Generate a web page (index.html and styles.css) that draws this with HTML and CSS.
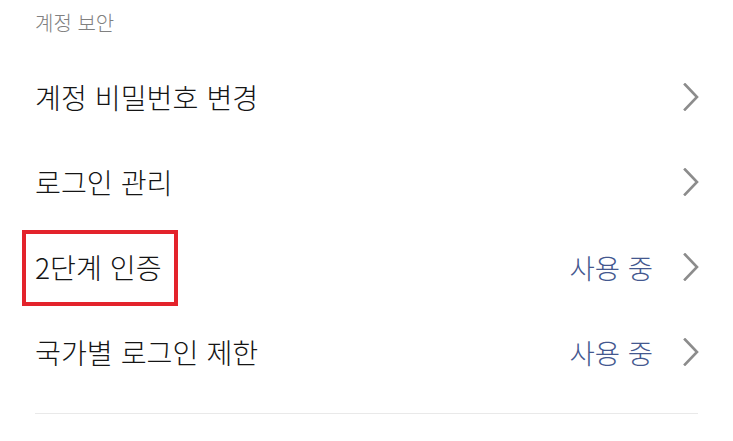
FILE: index.html
```html
<!DOCTYPE html>
<html lang="ko">
<head>
<meta charset="utf-8">
<link rel="stylesheet" href="styles.css">
</head>
<body>
<div class="page">
  <div class="section-title">계정 보안</div>
  <div class="row">
    <span class="label">계정 비밀번호 변경</span>
    <span class="right">
      <svg class="chev" viewBox="0 0 16 28" width="16" height="28"><polyline points="2,1.5 14,14 2,26.5"/></svg>
    </span>
  </div>
  <div class="row">
    <span class="label">로그인 관리</span>
    <span class="right">
      <svg class="chev" viewBox="0 0 16 28" width="16" height="28"><polyline points="2,1.5 14,14 2,26.5"/></svg>
    </span>
  </div>
  <div class="row">
    <span class="label">2단계 인증</span>
    <span class="right">
      <span class="status">사용 중</span>
      <svg class="chev" viewBox="0 0 16 28" width="16" height="28"><polyline points="2,1.5 14,14 2,26.5"/></svg>
    </span>
    <div class="highlight"></div>
  </div>
  <div class="row">
    <span class="label">국가별 로그인 제한</span>
    <span class="right">
      <span class="status">사용 중</span>
      <svg class="chev" viewBox="0 0 16 28" width="16" height="28"><polyline points="2,1.5 14,14 2,26.5"/></svg>
    </span>
  </div>
  <div class="divider"></div>
</div>
</body>
</html>
```
FILE: styles.css
```css
html, body {
  margin: 0;
  padding: 0;
  background: #ffffff;
}
body {
  font-family: "Noto Sans CJK KR", "Noto Sans", sans-serif;
  font-weight: 300;
}
.page {
  padding: 8px 35px 0 35px;
}
.section-title {
  font-size: 20px;
  line-height: 30px;
  color: #808080;
  margin-bottom: 16px;
}
.row {
  position: relative;
  height: 85px;
  display: flex;
  align-items: center;
  justify-content: space-between;
}
.label {
  font-size: 28.2px;
  color: #151515;
}
.right {
  display: flex;
  align-items: center;
  gap: 30px;
}
.status {
  font-size: 27.5px;
  color: #44588f;
}
.chev {
  display: block;
  margin-right: -1px;
}
.chev polyline {
  fill: none;
  stroke: #8c8c8c;
  stroke-width: 2.6;
  stroke-linecap: square;
  stroke-linejoin: miter;
}
.highlight {
  position: absolute;
  left: -13px;
  top: 6px;
  width: 156px;
  height: 76px;
  box-sizing: border-box;
  border: 4px solid #e3232b;
}
.divider {
  margin-top: 19px;
  height: 1px;
  background: #e9e9e9;
}
```
